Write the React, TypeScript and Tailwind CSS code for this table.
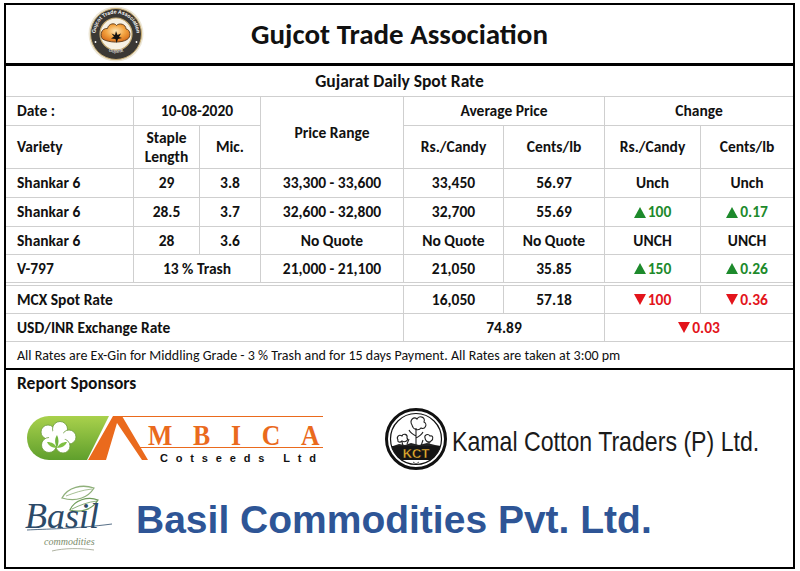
import React from "react";

function Up() {
  return (
    <svg width="12" height="11" viewBox="0 0 12 11" className="fill-current shrink-0">
      <path d="M6 0 L12 11 H0Z" />
    </svg>
  );
}
function Down() {
  return (
    <svg width="12" height="11" viewBox="0 0 12 11" className="fill-current shrink-0">
      <path d="M0 0 H12 L6 11Z" />
    </svg>
  );
}

function GujcotLogo() {
  return (
    <svg width="58" height="56" viewBox="0 0 58 56">
      <defs>
        <radialGradient id="gk" cx="50%" cy="40%" r="60%">
          <stop offset="0%" stopColor="#fde7b8" />
          <stop offset="55%" stopColor="#f3a340" />
          <stop offset="100%" stopColor="#d86f1c" />
        </radialGradient>
        <path id="arcTop" d="M8.5 28 A20.5 20.5 0 0 1 49.5 28" />
        <path id="arcBot" d="M13 37 A18 18 0 0 0 45 37" />
      </defs>
      <circle cx="29" cy="28" r="27.5" fill="#ece6d6" />
      <circle cx="29" cy="28" r="25.5" fill="#3b3834" stroke="#c9ad72" strokeWidth="1" />
      <circle cx="29" cy="28" r="16" fill="#f7f1e4" stroke="#c9ad72" strokeWidth="1.2" />
      <path d="M15.5 33 C12.5 29 14.5 22 20.5 22.5 C21.5 17.5 27.5 16.5 29.5 19.5 C32 16.5 39 18 39 23 C43.5 23.5 44.5 31 40 33.5 C35 37 22 37 15.5 33Z" fill="url(#gk)" stroke="#5a3a1a" strokeWidth="0.9" />
      <path d="M29 25 L30.5 29 L34 27.5 L32 31 L35 32 L31 33 L29.5 37 L28.5 33 L24 32.5 L27 30.5 L24.5 27.5 L28 29Z" fill="#111" />
      <text fontSize="5.2" fontWeight="bold" fill="#fff" fontFamily="Liberation Sans, sans-serif">
        <textPath href="#arcTop" startOffset="50%" textAnchor="middle">Gujcot Trade Association</textPath>
      </text>
      <text fontSize="4.6" fill="#fff" fontFamily="Liberation Sans, sans-serif">
        <textPath href="#arcBot" startOffset="50%" textAnchor="middle">Gujarat</textPath>
      </text>
      <circle cx="8.5" cy="36" r="0.9" fill="#fff" />
      <circle cx="49.5" cy="36" r="0.9" fill="#fff" />
    </svg>
  );
}

function AmbicaLogo() {
  return (
    <svg width="296" height="48" viewBox="0 0 296 48">
      <defs>
        <linearGradient id="ag" x1="0" y1="0" x2="0" y2="1">
          <stop offset="0%" stopColor="#a9d14c" />
          <stop offset="100%" stopColor="#5f9f2c" />
        </linearGradient>
      </defs>
      <path d="M22 1 H82 L60 45 H22 A22 22 0 0 1 22 1Z" fill="url(#ag)" />
      <g fill="#fff" stroke="#6a9a3a" strokeWidth="0.8">
        <circle cx="21" cy="17" r="7" />
        <circle cx="33" cy="14" r="7.5" />
        <circle cx="42" cy="22" r="7" />
        <circle cx="36" cy="31" r="7" />
        <circle cx="22" cy="30" r="7.5" />
        <circle cx="30" cy="23" r="8" stroke="none" />
      </g>
      <path d="M30 33 C27 27 28 23 30 20 C32 24 32 28 30 33Z" fill="#6fb33a" />
      <path d="M30 33 C25 33 21 30 20 27 C25 27 28 29 30 33Z" fill="#7fc042" />
      <path d="M30 33 C35 33 39 30 40 27 C35 27 32 29 30 33Z" fill="#7fc042" />
      <path d="M61 45 L86 1 L95 1 L121 45 L115 45 L90 8 L79 45Z" fill="#ea6a1d" />
      <line x1="95" y1="1.5" x2="296" y2="1.5" stroke="#ea6a1d" strokeWidth="1" />
      <line x1="108" y1="32.5" x2="296" y2="32.5" stroke="#ea6a1d" strokeWidth="1" />
      <g transform="translate(121 30) scale(0.78 0.92)">
        <text x="0" y="0" fontSize="33" fontWeight="bold" fill="#ea6a1d" fontFamily="Liberation Serif, serif" textLength="220" lengthAdjust="spacing">MBICA</text>
      </g>
      <text x="133" y="46.5" fontSize="11" fontWeight="bold" fill="#111" fontFamily="Liberation Sans, sans-serif" textLength="156" lengthAdjust="spacing">Cotseeds Ltd</text>
    </svg>
  );
}

function KctLogo() {
  return (
    <svg width="62" height="62" viewBox="0 0 62 62">
      <defs>
        <clipPath id="kc">
          <circle cx="31" cy="31" r="25.5" />
        </clipPath>
      </defs>
      <circle cx="31" cy="31" r="29.5" fill="#fff" stroke="#111" strokeWidth="3" />
      <circle cx="31" cy="31" r="25.5" fill="#fff" stroke="#111" strokeWidth="1.2" />
      <g clipPath="url(#kc)">
        <rect x="0" y="38" width="62" height="14" fill="#151515" />
        <g fill="none" stroke="#222" strokeWidth="1.1">
          <path d="M27 17 C24 12 29 8 32 11 C34 7 41 9 39 14 C43 16 40 22 36 20 C34 23 28 22 27 17Z" />
          <path d="M31 20 L31 38 M31 28 C27 26 25 24 24 22 M31 30 C35 28 37 26 38 24" />
          <path d="M13 32 C11 29 14 26 17 28 C18 25 23 26 22 30 C24 32 20 35 17 33 C15 35 12 34 13 32Z" />
          <path d="M40 30 C39 27 43 25 45 28 C48 27 49 31 46 33 C45 35 41 35 40 30Z" />
          <path d="M17 34 L18 38 M44 33 L44 38 M22 36 L24 31 M36 38 L38 32" />
        </g>
        <path d="M8 38 L14 36 L20 37 L26 35 L34 37 L42 35 L50 37 L56 38Z" fill="#222" />
        <text x="31" y="50" textAnchor="middle" fontSize="13" fontWeight="bold" fill="#f2b430" stroke="#111" strokeWidth="0.4" fontFamily="Liberation Sans, sans-serif">KCT</text>
        <path d="M28 54 L31 56 L34 54" fill="none" stroke="#333" strokeWidth="0.8" />
      </g>
    </svg>
  );
}

function BasilLogo() {
  return (
    <svg width="92" height="68" viewBox="0 0 92 68">
      <path d="M38 13 C44 2 58 -1 70 3 C64 13 52 17 38 13Z" fill="none" stroke="#8fb07a" strokeWidth="1.3" />
      <path d="M42 11 C50 8 58 5 68 4" fill="none" stroke="#8fb07a" strokeWidth="0.8" />
      <path d="M46 25 C50 15 64 11 74 15 C68 25 56 28 46 25Z" fill="none" stroke="#6f9c5a" strokeWidth="1.3" />
      <path d="M48 24 C56 20 64 17 73 16" fill="none" stroke="#6f9c5a" strokeWidth="0.8" />
      <text x="1" y="43" fontSize="36" fontStyle="italic" fill="#2c4a68" fontFamily="Liberation Serif, serif">Basil</text>
      <path d="M3 45 C20 44 50 44 88 39" fill="none" stroke="#2c4a68" strokeWidth="0.8" />
      <text x="20" y="60" fontSize="10" fontStyle="italic" fill="#7b8c6c" fontFamily="Liberation Serif, serif">commodities</text>
      <path d="M28 66 C40 63 56 63 70 65" fill="none" stroke="#9aa08a" strokeWidth="0.8" />
    </svg>
  );
}

export default function App() {
  const cell = "bg-white flex items-center justify-center";
  const first = "bg-white flex items-center justify-start pl-[11px]";
  const green = "bg-white flex items-center justify-center gap-[2px] text-[#1d8a2c]";
  const red = "bg-white flex items-center justify-center gap-[2px] text-[#e3141b]";
  const cols = "grid grid-cols-[127px_65px_60px_142px_99px_100px_95px_92px] gap-px bg-[#cfcfcf]";
  return (
    <div className="w-[800px] h-[571px] bg-white pt-[3px] pl-[4px] font-['Carlito','Lato',sans-serif] text-[#111]">
      <div className="w-[791px] h-[566px] border-2 border-black flex flex-col">
        <div className="h-[61px] shrink-0 grid grid-cols-[1fr_auto_1fr] items-center border-b-[3px] border-black">
          <div className="pl-[81px] flex items-center">
            <GujcotLogo />
          </div>
          <div className="text-[29px] font-bold leading-none">Gujcot Trade Association</div>
          <div />
        </div>
        <div className="h-[31px] shrink-0 flex items-center justify-center border-b border-[#cfcfcf] text-[17.5px] font-bold">
          Gujarat Daily Spot Rate
        </div>
        <div className={`${cols} grid-rows-[28px_42px_28px_28px_27px_27px] text-[15.5px] font-bold shrink-0`}>
          <div className={first}>Date :</div>
          <div className={`${cell} col-span-2`}>10-08-2020</div>
          <div className={`${cell} row-span-2`}>Price Range</div>
          <div className={`${cell} col-span-2`}>Average Price</div>
          <div className={`${cell} col-span-2`}>Change</div>

          <div className={first}>Variety</div>
          <div className={`${cell} text-center leading-[19px]`}>
            Staple
            <br />
            Length
          </div>
          <div className={cell}>Mic.</div>
          <div className={cell}>Rs./Candy</div>
          <div className={cell}>Cents/lb</div>
          <div className={cell}>Rs./Candy</div>
          <div className={cell}>Cents/lb</div>

          <div className={first}>Shankar 6</div>
          <div className={cell}>29</div>
          <div className={cell}>3.8</div>
          <div className={cell}>33,300 - 33,600</div>
          <div className={cell}>33,450</div>
          <div className={cell}>56.97</div>
          <div className={cell}>Unch</div>
          <div className={cell}>Unch</div>

          <div className={first}>Shankar 6</div>
          <div className={cell}>28.5</div>
          <div className={cell}>3.7</div>
          <div className={cell}>32,600 - 32,800</div>
          <div className={cell}>32,700</div>
          <div className={cell}>55.69</div>
          <div className={green}><Up />100</div>
          <div className={green}><Up />0.17</div>

          <div className={first}>Shankar 6</div>
          <div className={cell}>28</div>
          <div className={cell}>3.6</div>
          <div className={cell}>No Quote</div>
          <div className={cell}>No Quote</div>
          <div className={cell}>No Quote</div>
          <div className={cell}>UNCH</div>
          <div className={cell}>UNCH</div>

          <div className={first}>V-797</div>
          <div className={`${cell} col-span-2`}>13 % Trash</div>
          <div className={cell}>21,000 - 21,100</div>
          <div className={cell}>21,050</div>
          <div className={cell}>35.85</div>
          <div className={green}><Up />150</div>
          <div className={green}><Up />0.26</div>
        </div>
        <div className="h-[4px] shrink-0 border-y border-[#cfcfcf]" />
        <div className={`${cols} grid-rows-[27px_27px] text-[15.5px] font-bold shrink-0`}>
          <div className={`${first} col-span-4`}>MCX Spot Rate</div>
          <div className={cell}>16,050</div>
          <div className={cell}>57.18</div>
          <div className={red}><Down />100</div>
          <div className={red}><Down />0.36</div>

          <div className={`${first} col-span-4`}>USD/INR Exchange Rate</div>
          <div className={`${cell} col-span-2`}>74.89</div>
          <div className={`${red} col-span-2`}><Down />0.03</div>
        </div>
        <div className="h-[29px] shrink-0 flex items-center pl-[11px] border-t border-b-2 border-t-[#cfcfcf] border-b-black text-[14px] whitespace-nowrap">
          All Rates are Ex-Gin for Middling Grade - 3 % Trash and for 15 days Payment. All Rates are taken at 3:00 pm
        </div>
        <div className="flex-1 flex flex-col">
          <div className="pl-[11px] pt-[3px] text-[17.5px] font-bold leading-[20px]">Report Sponsors</div>
          <div className="mt-[15px] h-[62px] flex items-center">
            <div className="ml-[21px] flex items-center">
              <AmbicaLogo />
            </div>
            <div className="ml-[62px] flex items-center gap-[5px]">
              <KctLogo />
              <span className="mt-[6px] whitespace-nowrap origin-left scale-x-[0.826] font-['Liberation_Sans',sans-serif] text-[28px] leading-none text-[#1a1a1a]">
                Kamal Cotton Traders (P) Ltd.
              </span>
            </div>
          </div>
          <div className="mt-[16px] h-[66px] flex items-center">
            <div className="ml-[18px] flex items-center">
              <BasilLogo />
            </div>
            <span className="ml-[20px] whitespace-nowrap font-['Liberation_Sans',sans-serif] text-[39px] font-bold leading-none text-[#2e5596]">
              Basil Commodities Pvt. Ltd.
            </span>
          </div>
        </div>
      </div>
    </div>
  );
}
